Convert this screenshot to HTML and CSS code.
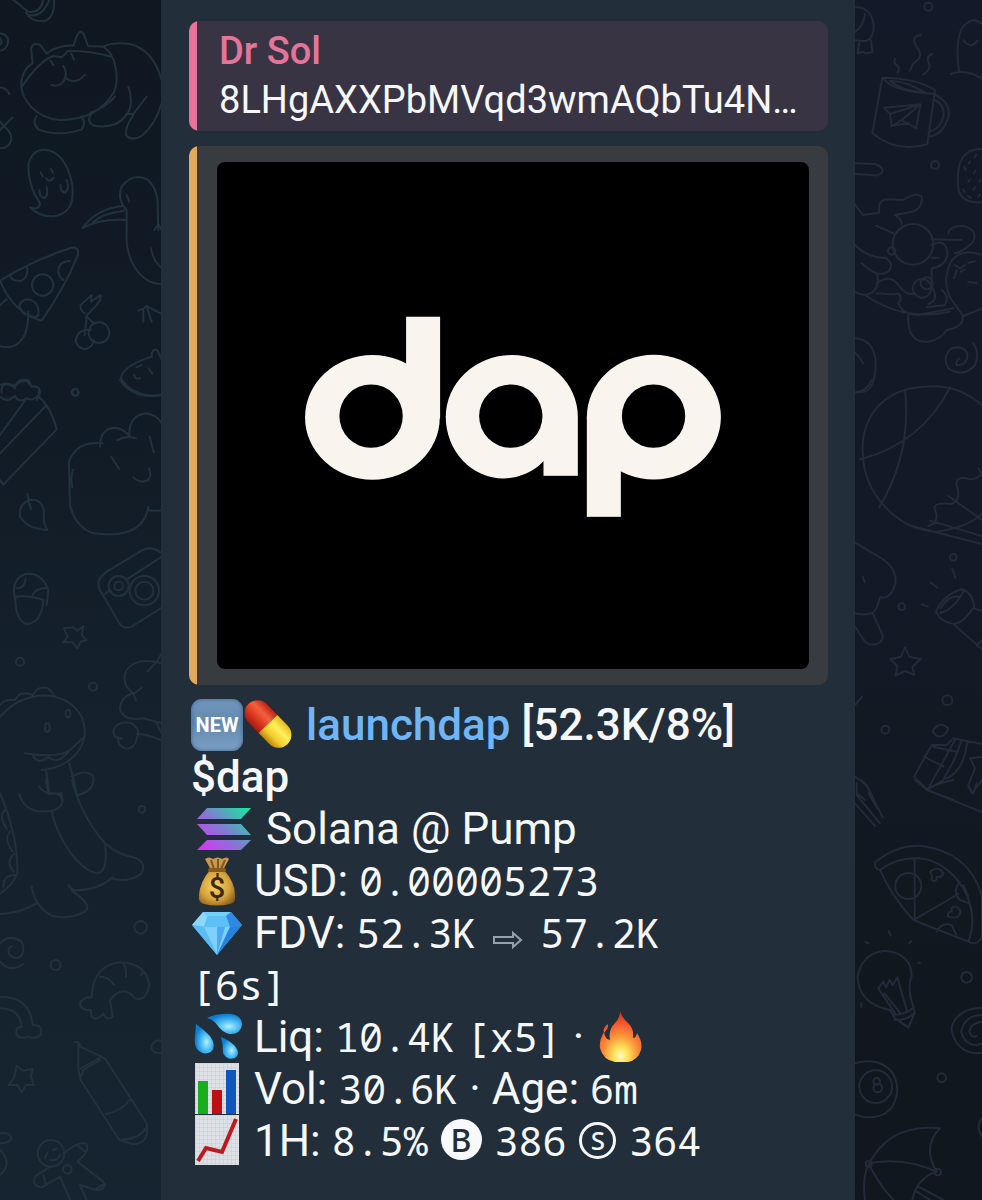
FILE: index.html
```html
<!DOCTYPE html>
<html lang="en">
<head>
  <meta charset="UTF-8">
  <meta name="viewport" content="width=device-width, initial-scale=1.0">
  <title>launchdap</title>
  <link rel="stylesheet" href="styles.css">
</head>
<body>

  <!-- Wallpaper, left -->
  <div class="wallpaper wallpaper-left" aria-hidden="true">
    <svg class="doodles" width="161" height="1200" viewBox="0 0 161 1200">
      <g transform="scale(.33333)">
        <path d="M40 0L85 35Q120 42 130 0M78 38Q95 65 130 64Q165 55 162 0M85 44Q125 55 148 0M0 100Q25 102 24 127Q20 150 0 152M0 115Q10 125 0 135M0 262Q20 265 28 282M0 390L38 352M0 365L25 392Q40 410 30 430Q20 445 0 445"/>
        <path d="M98 190L93 145Q100 125 120 135L140 160Q175 135 220 137L232 105Q242 85 252 105L264 138L310 140C350 165 360 240 340 280C300 345 240 360 180 360C110 355 60 300 64 245Q70 205 98 190M64 262Q120 180 160 168L185 172L205 152Q270 152 335 170M310 140Q340 125 390 132Q460 150 485 240M152 182L160 195M213 160L222 178M190 198Q205 220 190 245Q175 262 155 255M198 235Q215 250 240 238L255 224M110 348Q95 370 115 388Q175 412 245 388Q260 370 245 350M275 340Q255 365 285 378Q350 385 375 350Q405 320 385 260M272 338Q320 320 345 290M378 342H400L440 290M400 345Q375 380 378 405Q395 425 425 408Q465 375 485 310"/>
        <path d="M120 610Q80 550 86 490Q100 445 140 450C200 460 225 550 216 600C205 655 135 665 90 622Q118 632 120 610M122 517L128 530M153 507L159 518M138 535Q150 550 161 533M118 570Q118 592 133 594Q145 588 140 562M182 555Q180 575 195 578Q210 565 200 540"/>
        <path d="M485 852C415 850 375 770 380 700V630Q350 600 365 560Q400 515 445 540Q475 570 473 620L475 690M380 585L388 605M370 618Q290 625 248 684Q300 655 380 660M372 632Q310 640 280 665M463 690L475 672L485 690M453 745Q460 785 485 803"/>
        <path d="M0 842Q110 775 220 742Q240 745 232 770Q190 870 125 962Q40 940 0 842M30 826Q35 845 65 842Q85 830 82 803M210 783Q170 785 176 820Q180 835 190 840M58 918Q65 895 90 899Q120 910 115 945L105 952L70 940ZM85 935Q85 1000 60 1025Q35 1050 0 1038M0 915L20 898"/><circle cx="128" cy="855" r="32"/>
        <circle cx="297" cy="998" r="31"/><path d="M272 990Q235 985 226 1022Q235 1048 258 1047Q280 1040 281 1020M254 1005L260 950L280 968M255 940Q240 935 242 915L275 885L273 905L302 885Q305 905 275 930L258 950M415 932L432 925L440 918L485 942M430 930L430 965M440 920L455 965M485 1185Q400 1195 363 1135Q365 1100 455 1070Q455 1045 472 1050L485 1078M410 1102L425 1095M446 1105L456 1120M402 1125Q405 1140 420 1134M5 1178Q0 1150 30 1153Q50 1160 50 1150Q60 1135 85 1140L95 1160Q120 1155 120 1180L110 1200"/><circle cx="226" cy="1177" r="10"/>
      </g>
      <g transform="translate(0 380) scale(.33333)">
        <path d="M360 0Q400 60 485 45M0 15L15 10Q35 15 45 25Q50 0 80 3L95 20Q125 15 115 45Q100 65 80 55Q55 70 45 48Q20 70 0 50M0 165L75 62M0 220L140 75M115 48Q155 85 170 148L10 314L0 300M82 342L87 370L93 387M88 360Q55 375 60 410Q80 445 142 450Q128 430 132 400Q130 355 88 360"/><circle cx="226" cy="37" r="10"/>
        <path d="M308 190Q230 180 207 245L210 375Q225 440 280 460Q430 480 445 380M445 390Q465 395 485 390M300 200Q300 145 345 143Q370 145 388 168Q385 110 435 100Q470 103 485 130M352 180Q380 165 408 175M334 230L357 266M449 170L461 217M400 292Q420 312 445 300Q455 285 447 265M220 268Q210 290 217 322"/>
        <path d="M485 520Q455 495 425 512L320 575Q285 600 300 630L355 725Q370 750 395 740L485 683M385 595L485 530M315 642L330 630"/><circle cx="356" cy="618" r="30"/><circle cx="356" cy="618" r="13"/><circle cx="433" cy="632" r="44"/><circle cx="433" cy="632" r="27"/>
        <path d="M46 660Q30 600 75 582Q125 575 145 630L140 675M46 650Q90 645 130 660Q125 730 80 732Q45 720 46 650M50 625Q75 625 77 595M98 645Q105 625 142 623M220 742L233 752L250 738L245 765L260 780L242 785L232 805L218 787L190 787L203 770L192 745Z"/><circle cx="60" cy="845" r="12"/><circle cx="279" cy="920" r="12"/>
        <path d="M485 850Q410 830 380 870Q360 910 400 940Q360 950 360 990Q375 1025 430 1015L485 1030M400 940L408 962M400 943L425 923M442 875L470 845L485 820M366 1075Q340 1080 340 1050Q355 1020 395 1030Q425 1050 410 1075Q405 1105 380 1106Q350 1100 355 1070M410 1062Q440 1060 485 1082M485 1060L470 1030"/>
        <path d="M0 1010C80 920 200 930 245 1010Q270 1070 230 1120Q190 1165 125 1170M0 975Q15 955 45 960Q60 930 98 945Q115 915 145 925L165 948M75 1120Q180 1135 210 1110L248 1075M98 1125Q110 1155 145 1132Q175 1155 205 1115M138 1170L148 1240M118 1220Q130 1245 185 1240V1260M208 1150L235 1260M215 1190Q260 1165 280 1190Q285 1230 235 1245"/><ellipse cx="142" cy="1043" rx="7" ry="13"/><ellipse cx="204" cy="1001" rx="7" ry="11"/>
      </g>
      <g transform="translate(0 780) scale(.33333)">
        <path d="M0 40Q55 170 52 280Q35 320 0 340M15 90Q-5 110 20 145M30 155Q10 175 38 215M42 222Q15 245 42 275M45 285Q10 285 10 320M58 42Q70 85 110 93Q185 100 188 60Q182 35 145 42L138 0M215 0Q245 110 315 190Q325 280 290 280C230 265 170 170 155 92M315 190Q355 225 410 235Q440 250 425 280Q390 310 330 295M205 315L218 330Q290 335 338 292M215 332Q280 375 255 395Q210 420 155 407Q105 380 95 320M0 402Q60 400 110 370M232 45Q280 35 280 0"/>
        <circle cx="426" cy="88" r="10"/><circle cx="422" cy="442" r="19"/><circle cx="167" cy="555" r="15"/>
        <path d="M0 490Q30 460 65 485Q80 525 50 535Q20 530 27 505L35 498M0 545Q30 580 70 552M0 650Q90 650 98 735Q130 735 122 765Q105 780 85 770Q65 780 50 765Q45 740 65 740Q60 685 0 685M275 650Q280 555 360 547Q440 550 447 615Q440 665 405 655Q370 610 330 660L338 710Q320 725 310 700Q290 725 275 710L272 690Q235 690 242 665Q255 650 275 652M300 590Q325 590 342 614M368 548Q380 565 378 590M430 575L422 586"/>
        <path d="M225 787Q240 780 240 800L305 830L318 840L440 1030Q450 1090 400 1093L358 1080L242 900L235 870L305 830M235 790L235 865M240 895L250 870L300 840M318 1003Q370 990 390 958M365 1078Q415 1080 440 1042M485 820Q450 820 455 795Q470 775 485 785M50 857L68 872L98 867L92 890L102 915L78 915L65 937L52 915H26L42 893Z"/>
        <circle cx="153" cy="1120" r="40"/><circle cx="202" cy="1168" r="13"/><path d="M192 1120Q240 1080 260 1092Q270 1115 232 1145L310 1205Q320 1230 290 1230L240 1215L260 1260M150 1160L105 1190Q95 1220 125 1222L180 1190L210 1260M130 1185L138 1215M232 1095L255 1115M290 1225L315 1212M135 1135L142 1118M160 1110L170 1105M150 1140Q170 1145 180 1125M0 1060Q30 1055 34 1075Q30 1090 0 1090M0 1110Q40 1150 0 1185"/>
      </g>
    </svg>
  </div>

  <main class="message">

    <!-- Quoted reply -->
    <blockquote class="quote reply">
      <p class="reply-author">Dr Sol</p>
      <p class="reply-text">8LHgAXXPbMVqd3wmAQbTu4N…</p>
    </blockquote>

    <!-- Link preview -->
    <div class="quote preview">
      <svg class="preview-image" viewBox="0 0 592 507" role="img" aria-label="dap logo">
        <defs>
          <clipPath id="upper"><rect x="480" y="100" width="430" height="251"/></clipPath>
          <clipPath id="lower"><rect x="480" y="349" width="430" height="251"/></clipPath>
        </defs>
        <rect width="592" height="507" fill="#000"/>
        <g transform="translate(63 138) scale(.33333)" fill="#f9f5ee">
          <ellipse cx="277" cy="352" rx="202" ry="187"/>
          <rect x="378" y="50" width="102" height="305"/>
          <ellipse cx="695" cy="350" rx="198" ry="185" clip-path="url(#upper)"/>
          <ellipse cx="670" cy="350" rx="173" ry="185" clip-path="url(#lower)"/>
          <rect x="790" y="350" width="103" height="177"/>
          <ellipse cx="1121" cy="351" rx="201" ry="187"/>
          <rect x="920" y="350" width="102" height="300"/>
          <g fill="#000">
            <circle cx="273" cy="348" r="95"/>
            <circle cx="692" cy="348" r="95"/>
            <circle cx="1120" cy="348" r="95"/>
          </g>
        </g>
      </svg>
    </div>

    <!-- Token info -->
    <div class="info">
      <p class="title">
        <span class="new">NEW</span><svg class="emoji" viewBox="0 0 52 52">
          <defs>
            <linearGradient id="pillRed" x1="0" y1="0" x2="0" y2="1"><stop offset="0" stop-color="#b92219"/><stop offset=".35" stop-color="#f5613c"/><stop offset=".65" stop-color="#dd3a23"/><stop offset="1" stop-color="#a71810"/></linearGradient>
            <linearGradient id="pillYellow" x1="0" y1="0" x2="0" y2="1"><stop offset="0" stop-color="#e6b91e"/><stop offset=".35" stop-color="#fff05c"/><stop offset=".7" stop-color="#f3cd2c"/><stop offset="1" stop-color="#b98412"/></linearGradient>
          </defs>
          <g transform="translate(25 25) rotate(46)">
            <path d="M0-13H-15A13 13 0 0 0-15 13H0Z" fill="url(#pillRed)"/>
            <path d="M0-13H15A13 13 0 0 1 15 13H0Z" fill="url(#pillYellow)"/>
          </g>
        </svg>
        <a href="#">launchdap</a> [52.3K/8%]<br>$dap
      </p>
      <p>
        <svg class="emoji wide" viewBox="0 0 64 52">
          <defs><linearGradient id="sol" gradientUnits="userSpaceOnUse" x1="12" y1="47" x2="54" y2="3"><stop offset="0" stop-color="#d637f5"/><stop offset=".5" stop-color="#7c7fd0"/><stop offset="1" stop-color="#19e8a0"/></linearGradient></defs>
          <path d="M16 5H60L50 16H6ZM6 21H50L60 32H16ZM16 37H60L50 47H6Z" fill="url(#sol)"/>
        </svg>
        Solana @ Pump
      </p>
      <p>
        <svg class="emoji" viewBox="0 0 52 52">
          <defs><radialGradient id="bag" cx=".45" cy=".45" r=".65"><stop offset="0" stop-color="#f5d26a"/><stop offset=".6" stop-color="#d6a43c"/><stop offset="1" stop-color="#8a5a1c"/></radialGradient></defs>
          <path d="M14 4Q18 1 22 4Q27 1 31 4Q36 1 38 4L32 15H20Z" fill="#c99a4a"/>
          <path d="M20 5L23 14M27 4V14M34 5L30 14" stroke="#7f5722" stroke-width="2" fill="none"/>
          <path d="M19 15H33Q44 27 44 40Q45 48 39 49Q26 52 13 49Q7 48 8 40Q9 27 19 15Z" fill="url(#bag)"/>
          <rect x="17" y="13" width="18" height="4" rx="2" fill="#8a5a25"/>
          <text x="26" y="43" text-anchor="middle" class="bag-sign">$</text>
        </svg>
        USD: <code>0.00005273</code>
      </p>
      <p>
        <svg class="emoji" viewBox="0 0 52 52">
          <path d="M12 5H40L51 18L26 48L1 18Z" fill="#43a9f0"/>
          <path d="M12 5H40L35 9H17Z" fill="#74d0fb"/>
          <path d="M12 5L17 9L13 20L1 18Z" fill="#8bd8fa"/>
          <path d="M40 5L35 9L39 20L51 18Z" fill="#2f88e2"/>
          <path d="M17 9H35L39 20H13Z" fill="#5cc0f7"/>
          <path d="M1 18L13 20L26 48Z" fill="#5bbcf6"/>
          <path d="M13 20H39L26 48Z" fill="#7fd0fb"/>
          <path d="M39 20L51 18L26 48Z" fill="#2583df"/>
          <path d="M26 20L26 48L34 20Z" fill="#4aa9f0"/>
        </svg>
        FDV: <code>52.3K</code>
        <svg class="arrow" viewBox="0 0 42 52" role="img" aria-label="to"><path d="M7 30H26V26L34 33L26 40V36H7Z"/></svg>
        <code>57.2K<br>[6s]</code>
      </p>
      <p>
        <svg class="emoji" viewBox="0 0 52 52">
          <defs><radialGradient id="drop" cx=".62" cy=".62" r=".6"><stop offset="0" stop-color="#b5f0ff"/><stop offset=".45" stop-color="#4fc0f5"/><stop offset="1" stop-color="#0a7dcf"/></radialGradient></defs>
          <path d="M16 7Q27 2 41 3Q51 5 51 14Q49 24 38 23Q30 20 27 15Q23 9 16 7Z" fill="url(#drop)"/>
          <path d="M5 13Q12 18 19 25Q26 35 20 41Q12 45 6 38Q3 34 4 25Z" fill="url(#drop)"/>
          <path d="M30 26Q38 29 44 35Q50 43 44 47Q36 50 32 42Q32 33 30 26Z" fill="url(#drop)"/>
        </svg>
        Liq: <code>10.4K</code> <code>[x5]</code> ·
        <svg class="emoji fire" viewBox="0 0 52 52">
          <defs><radialGradient id="flame" cx=".5" cy=".88" r=".85"><stop offset="0" stop-color="#fffbc0"/><stop offset=".2" stop-color="#ffe25a"/><stop offset=".45" stop-color="#fb9a3b"/><stop offset=".75" stop-color="#f5572f"/><stop offset="1" stop-color="#d93118"/></radialGradient></defs>
          <path d="M25 0Q27 7 34 13Q39 18 38 27Q41 27 42 22Q48 31 46 39Q43 49 33 51H20Q8 49 5 37Q4 29 9 21Q10 28 15 29Q13 19 20 12Q25 7 25 0ZM13 13Q14 17 9 22Q7 17 13 13Z" fill="url(#flame)"/>
        </svg>
      </p>
      <p>
        <svg class="emoji" viewBox="0 0 52 52">
          <defs><pattern id="paper" width="4" height="4" patternUnits="userSpaceOnUse"><rect width="4" height="4" fill="#dde1e6"/><path d="M0 0H4M0 0V4" stroke="#c6ced6" stroke-width="1"/></pattern></defs>
          <rect x="4" y="0" width="44" height="51" fill="url(#paper)"/>
          <rect x="7" y="18" width="10" height="33" fill="#17b01c"/>
          <rect x="21" y="27" width="10" height="24" fill="#bd1014"/>
          <rect x="35" y="7" width="10" height="44" fill="#1057bd"/>
        </svg>
        Vol: <code>30.6K</code> · Age: <code>6m</code>
      </p>
      <p>
        <svg class="emoji" viewBox="0 0 52 52">
          <rect x="4" y="0" width="44" height="50" fill="url(#paper)"/>
          <path d="M7 46L15 33L31 37L45 4" fill="none" stroke="#bb1a20" stroke-width="4"/>
        </svg>
        1H: <code>8.5%</code> <span class="badge buys">B</span> <code>386</code> <span class="badge sells">S</span> <code>364</code>
      </p>
    </div>
  </main>

  <!-- Wallpaper, right -->
  <div class="wallpaper wallpaper-right" aria-hidden="true">
    <svg class="doodles" width="127" height="1200" viewBox="0 0 127 1200">
      <g transform="translate(-15) scale(.33333)">
        <circle cx="265" cy="20" r="12"/><circle cx="285" cy="495" r="12"/>
        <path d="M45 22Q90 20 100 70Q105 110 80 122Q60 125 45 120M75 42Q70 80 45 95M58 125L53 160L70 155L77 160L98 157L92 120M426 70Q395 45 365 85Q345 130 357 212M332 222Q375 205 426 235M370 120Q390 150 413 122M405 60L426 72"/>
        <path d="M127 233L97 400Q170 460 262 433L285 270Q230 235 130 233Q150 275 285 282M150 243Q190 240 255 277Q190 275 150 243M287 285Q335 310 325 350Q310 405 265 410M285 300Q315 315 310 350Q300 385 270 395M132 323L242 313L228 385L185 360L242 313L150 342L155 378L185 360M132 323L150 342M155 378L205 368M165 177Q160 190 170 195Q182 205 173 217M242 105Q210 110 230 140Q255 170 220 190L210 212M277 162Q255 170 268 192Q272 210 248 225M45 490L105 492Q130 500 127 515Q120 530 95 525L45 522"/>
        <path d="M426 447Q370 445 357 500Q350 540 357 575Q370 610 426 607M373 500L377 510M387 490L390 484M404 472L408 464M385 545L390 538M402 520L406 512M400 570L405 562M373 575L370 568M418 545L422 540M385 588L392 594M415 590L420 584"/>
        <path d="M45 613L68 645L118 638Q112 600 140 598L190 600Q230 575 245 590Q250 625 215 635L165 645Q185 655 185 672M108 677L160 700M45 735Q85 775 135 773Q165 790 145 815Q120 830 90 810L65 790M110 820Q125 870 80 885Q60 885 45 875M110 850Q150 820 175 855Q200 890 225 880M110 880Q165 885 175 880Q190 895 175 910Q190 945 235 945L340 925M75 885Q190 965 330 935M205 945Q200 1030 265 1025Q300 1020 320 990Q375 980 368 945M275 718L365 720M275 735Q320 710 322 765Q315 800 275 805V860Q300 900 265 912M325 700Q330 675 370 678Q415 690 400 725Q370 755 345 760M426 765Q360 740 330 790Q305 850 335 900L370 948L426 925M345 795L360 805L375 795M350 810L342 835M362 815L375 808M385 788L405 784M385 845L410 850M275 773H295M305 870Q330 890 315 915L260 922"/>
        <circle cx="219" cy="733" r="61"/><circle cx="246" cy="865" r="28"/><circle cx="260" cy="850" r="18"/><circle cx="155" cy="753" r="11"/>
        <path d="M45 1015Q105 1020 107 1090Q105 1175 65 1177H45M45 1058Q60 1070 70 1090M358 1075Q345 1085 350 1095Q385 1095 382 1060Q370 1035 335 1045Q305 1070 325 1105Q370 1135 405 1095Q420 1060 400 1030"/>
      </g>
      <g transform="translate(-15 380) scale(.33333)">
        <path d="M426 75Q350 10 255 20C130 25 65 110 68 215C70 340 170 450 290 455Q390 440 426 400M195 30Q215 220 118 382M60 238Q245 190 330 22M95 0Q80 35 45 38M215 438L426 492M270 422L426 468M325 348L426 420M415 265L426 280Q405 305 380 295Q345 290 350 315Q365 360 335 372Q275 365 285 390Q300 425 265 438"/>
        <path d="M45 488Q90 515 120 532Q175 565 165 615Q150 660 120 652Q110 695 95 700Q70 707 45 700M45 740L75 785Q90 798 110 792Q130 785 128 765L97 697M68 590L74 607M288 695Q310 645 365 627Q400 640 402 680Q370 730 340 732Q300 725 288 695M300 698Q325 695 350 665Q370 640 370 630M302 685Q325 645 355 650M340 732L426 808M400 685L426 692M410 797L426 780M337 566L347 595M273 608L292 623M245 673L263 680"/>
        <path d="M195 802L208 830L242 838L217 860L223 885L195 873L167 887L172 858L151 838L183 830ZM45 975L67 950M426 1092L340 1075L320 1095H275L222 1190L262 1230L340 1260M252 1130L310 1160M280 1100L350 1115M345 1080L265 1225M365 1080L345 1135L310 1200L265 1228M382 1085Q370 1175 320 1195M426 1130L390 1135L405 1165L385 1215L395 1240L426 1200M45 1190L80 1215L100 1260M50 1210V1240L75 1260M278 1055Q295 1020 325 1045Q315 1075 290 1068Z"/>
        <circle cx="340" cy="532" r="10"/><circle cx="185" cy="680" r="10"/><circle cx="322" cy="961" r="15"/><circle cx="136" cy="1049" r="12"/>
      </g>
      <g transform="translate(-15 780) scale(.33333)">
        <path d="M225 0L262 30L426 96M262 25L300 10L340 0M385 20L400 40L410 10M65 0L85 25L128 112M45 70L105 138M50 45L120 130M85 40L112 85"/>
        <path d="M120 270Q100 265 107 245Q170 195 240 197Q390 215 426 350V470Q410 500 385 485L220 420Q155 350 120 270Q170 230 240 235C340 245 430 370 385 485M224 235V418L355 342M290 455Q305 425 335 435L348 463M360 305Q335 335 360 360L388 370M370 315L385 350M270 275Q295 255 310 280Q305 295 290 290Q290 310 275 300Q280 290 270 275M335 385Q350 370 362 395Q355 420 325 410Q320 395 335 395Z"/><circle cx="205" cy="318" r="39"/>
        <path d="M150 690Q55 670 53 590Q65 520 135 512Q215 520 215 590Q200 620 220 680L224 700L205 742L165 715L150 690M115 625L165 700M115 625L130 605L138 622L148 600L158 615L172 592L200 690M133 640L180 698M158 705Q195 705 220 683M163 720Q200 722 222 700M146 453L152 467M77 486L85 490M207 491L214 484M235 548H240M64 670V680"/>
        <path d="M426 683Q350 685 334 745Q345 815 410 820L426 818M426 705Q375 705 363 755Q375 795 410 795L426 790M426 725Q390 730 388 755Q395 775 410 768M45 850Q75 840 110 847Q170 865 172 930Q165 1010 90 1012Q65 1012 45 1003M426 1015Q405 1040 426 1070"/>
        <circle cx="107" cy="920" r="49"/><circle cx="110" cy="904" r="10"/><circle cx="113" cy="924" r="13"/><circle cx="380" cy="592" r="16"/><circle cx="305" cy="893" r="13"/>
        <path d="M88 1150Q150 1030 300 1045Q245 1100 290 1175Q190 1130 88 1150Q65 1190 75 1260M88 1155Q115 1210 160 1260M290 1175Q230 1195 217 1260M235 1220L310 1260M230 1235L270 1260"/><circle cx="86" cy="1152" r="9"/><circle cx="293" cy="1176" r="10"/>
      </g>
    </svg>
  </div>

</body>
</html>
```

FILE: styles.css
```css
* {
  margin: 0;
  padding: 0;
  box-sizing: border-box;
}

body {
  display: grid;
  grid-template-columns: 16.4% minmax(0, 1fr) 12.9%;
  min-height: 100vh;
  background-color: #111a24;
  color: #f5f7f9;
  font-family: Roboto, sans-serif;
}

/* Wallpaper */
.wallpaper {
  overflow: hidden;
  min-width: 0;
}

.wallpaper-left {
  background: linear-gradient(#0f1821, #111b26 35%, #15222d 65%, #162431);
  color: #22323d;
}

.wallpaper-right {
  background: linear-gradient(#121a29, #121a27 45%, #101820 75%, #10171e);
  color: #212b39;
}

.doodles {
  display: block;
  fill: none;
  stroke: currentColor;
  stroke-width: 6;
  stroke-linecap: round;
  stroke-linejoin: round;
}

/* Message */
.message {
  padding: 21px 27px 24px 28px;
  background-color: #222e39;
}

.quote {
  border-radius: 10px;
}

.reply {
  padding: 6px 20px 6px 30px;
  background: linear-gradient(to right, #e8729b 8px, #393443 8px);
  font-size: 38px;
}

.reply-author {
  color: #e5749b;
  font-weight: 500;
  line-height: 48px;
}

.reply-text {
  line-height: 50px;
  white-space: nowrap;
  overflow: hidden;
}

.preview {
  margin-top: 15px;
  padding: 16px 19px 16px 28px;
  background: linear-gradient(to right, #e3aa5e 8px, #383b3f 8px);
}

.preview-image {
  display: block;
  width: 100%;
  border-radius: 8px;
}

/* Token info */
.info {
  padding: 14px 0 0 2px;
  font-size: 44px;
  line-height: 52px;
}

.title {
  font-weight: 500;
}

.title a {
  color: #70b5f5;
  text-decoration: none;
}

code {
  font-family: "Droid Sans Mono", "Noto Sans Mono", "DejaVu Sans Mono", monospace;
  font-size: 40px;
  line-height: 1;
}

.emoji {
  width: 52px;
  height: 52px;
  vertical-align: top;
}

.emoji.wide {
  width: 64px;
}

.new {
  display: inline-block;
  width: 52px;
  height: 52px;
  border-radius: 11px;
  background: linear-gradient(#7297bd, #6288af 45%, #7c9fc4);
  box-shadow: inset 0 0 4px #3e618a;
  color: #fff;
  font-size: 20px;
  font-weight: 700;
  text-align: center;
  vertical-align: top;
}

.bag-sign {
  fill: #3c2a10;
  font-size: 29px;
  font-weight: 500;
}

.arrow {
  width: 42px;
  height: 52px;
  fill: none;
  stroke: #98a1a9;
  stroke-width: 2;
  vertical-align: top;
}

/* Buy and sell counters */
.badge {
  display: inline-block;
  margin: 4px 2px 0;
  border-radius: 50%;
  font-family: "Noto Sans", sans-serif;
  text-align: center;
  vertical-align: top;
}

.buys {
  width: 41px;
  height: 41px;
  background-color: #f8f9fa;
  color: #222e39;
  font-size: 32px;
  font-weight: 500;
  line-height: 41px;
}

.sells {
  width: 37px;
  height: 37px;
  margin-top: 7px;
  border: 3px solid #f5f7f9;
  font-size: 26px;
  font-weight: 500;
  line-height: 31px;
}
```
